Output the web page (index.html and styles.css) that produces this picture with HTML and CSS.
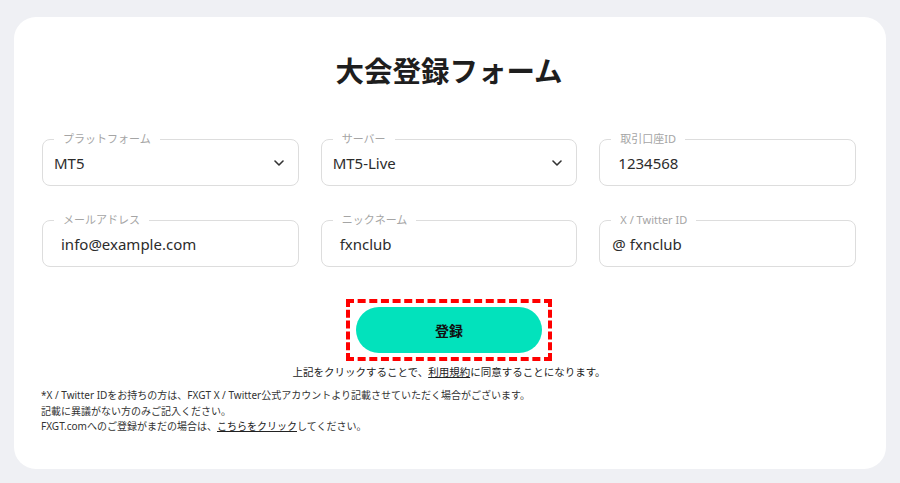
FILE: index.html
```html
<!DOCTYPE html>
<html lang="ja">
<head>
<meta charset="utf-8">
<title>大会登録フォーム</title>
<link rel="stylesheet" href="styles.css">
</head>
<body>
<main class="card">
  <h1 class="title">大会登録フォーム</h1>
  <form class="grid">
    <fieldset class="field">
      <legend>プラットフォーム</legend>
      <div class="control select"><span>MT5</span>
        <svg class="chev" width="10" height="6" viewBox="0 0 10 6"><path d="M1 1l4 4 4-4" fill="none" stroke="#333" stroke-width="1.6" stroke-linecap="round" stroke-linejoin="round"/></svg>
      </div>
    </fieldset>
    <fieldset class="field">
      <legend>サーバー</legend>
      <div class="control select"><span>MT5-Live</span>
        <svg class="chev" width="10" height="6" viewBox="0 0 10 6"><path d="M1 1l4 4 4-4" fill="none" stroke="#333" stroke-width="1.6" stroke-linecap="round" stroke-linejoin="round"/></svg>
      </div>
    </fieldset>
    <fieldset class="field">
      <legend>取引口座ID</legend>
      <div class="control"><span>1234568</span></div>
    </fieldset>
    <fieldset class="field">
      <legend>メールアドレス</legend>
      <div class="control"><span>info@example.com</span></div>
    </fieldset>
    <fieldset class="field">
      <legend>ニックネーム</legend>
      <div class="control"><span>fxnclub</span></div>
    </fieldset>
    <fieldset class="field">
      <legend>X / Twitter ID</legend>
      <div class="control prefix"><span class="at">@</span><span>fxnclub</span></div>
    </fieldset>
  </form>
  <div class="actions">
    <div class="highlight"><button class="submit" type="button">登録</button></div>
    <p class="agree">上記をクリックすることで、<a href="#">利用規約</a>に同意することになります。</p>
  </div>
  <div class="notes">
    <p>*X / Twitter IDをお持ちの方は、FXGT X / Twitter公式アカウントより記載させていただく場合がございます。</p>
    <p>記載に異議がない方のみご記入ください。</p>
    <p>FXGT.comへのご登録がまだの場合は、<a href="#">こちらをクリック</a>してください。</p>
  </div>
</main>
</body>
</html>
```

FILE: styles.css
```css
* { box-sizing: border-box; }
html, body { margin: 0; padding: 0; }
body {
  background: #eff0f4;
  font-family: "Noto Sans", "Noto Sans CJK JP", sans-serif;
  color: #222;
  padding: 17px 14px 14px;
}
.card {
  background: #fff;
  border-radius: 22px;
  height: 452px;
  padding: 33px 30px 0 28px;
}
.title {
  margin: 0;
  text-align: center;
  font-size: 28.5px;
  line-height: 40px;
  font-weight: 700;
  color: #1e1e1e;
  font-family: "Noto Sans CJK JP", sans-serif;
}
.grid {
  margin: 43px 0 0;
  display: grid;
  grid-template-columns: repeat(3, 1fr);
  column-gap: 22px;
  row-gap: 28px;
}
.field {
  margin: 0;
  padding: 0 12px 0 11px;
  border: 1.5px solid #dddddd;
  border-radius: 8px;
  min-width: 0;
}
.field legend {
  padding: 0 9px 0 9px;
  font-size: 11px;
  line-height: 12px;
  color: #a5a5a5;
  font-family: "Noto Sans", "Noto Sans CJK JP", sans-serif;
}
.control {
  height: 40px;
  display: flex;
  align-items: center;
  padding: 0 0 5px 7px;
  font-size: 15px;
  color: #2c2c2c;
}
.control.select { padding-left: 0; justify-content: space-between; }
.control.prefix { padding-left: 1px; }
.control .at { margin-right: 4px; }
.chev { margin-right: 2px; margin-top: 1px; }
.actions {
  margin-top: 32px;
  display: flex;
  flex-direction: column;
  align-items: center;
}
.highlight {
  border: 4px dashed #ff0000;
  padding: 4px 6px;
}
.submit {
  display: block;
  width: 186px;
  height: 46px;
  border: none;
  border-radius: 23px;
  background: #02e2bc;
  font-family: "Noto Sans CJK JP", sans-serif;
  font-size: 14px;
  font-weight: 700;
  color: #111;
}
.agree {
  margin: 3px 0 0;
  font-size: 10.5px;
  line-height: 16px;
  color: #222;
  font-family: "Noto Sans CJK JP", sans-serif;
}
.agree a, .notes a { color: #222; text-decoration: underline; }
.notes {
  margin-top: 8px;
  margin-left: -1px;
  font-size: 10px;
  line-height: 15.5px;
  color: #333;
}
.notes p { margin: 0; }
```
